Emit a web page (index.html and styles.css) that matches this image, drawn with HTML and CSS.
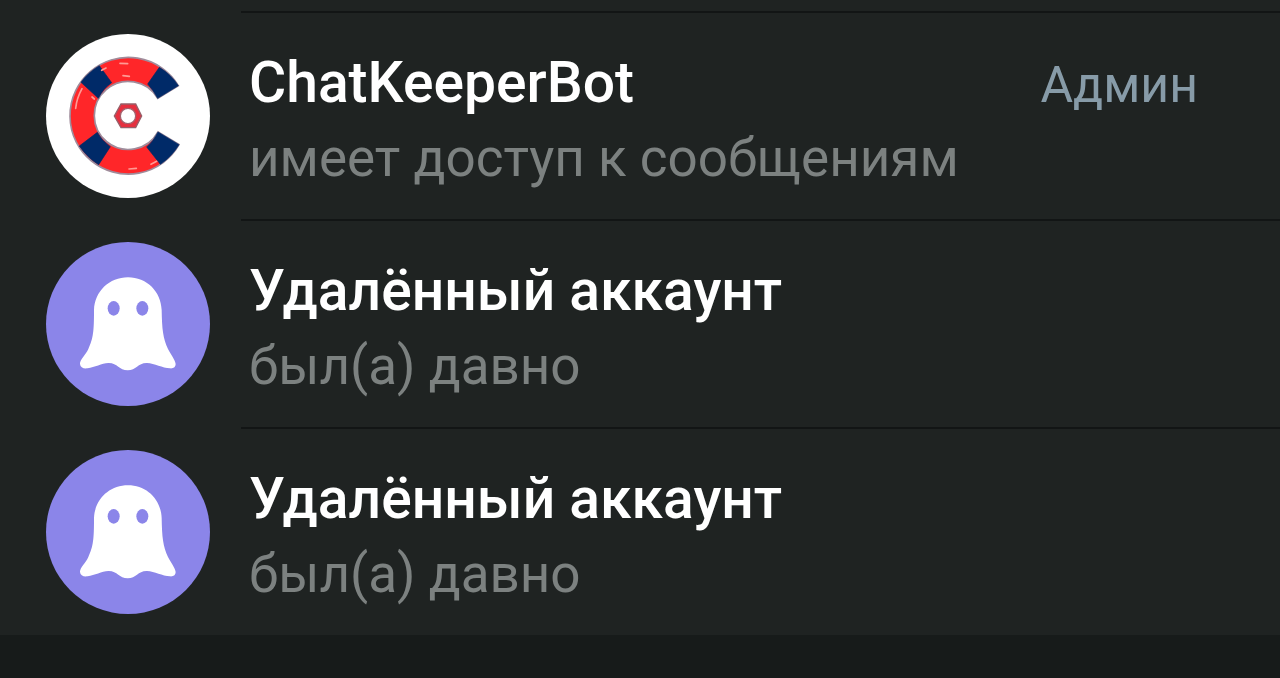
FILE: index.html
```html
<!DOCTYPE html>
<html lang="ru">
<head>
<meta charset="utf-8">
<meta name="viewport" content="width=device-width, initial-scale=1">
<title>Участники</title>
<link rel="stylesheet" href="styles.css">
</head>
<body>
<svg class="defs" aria-hidden="true">
  <symbol id="ghost" viewBox="18 18 492 492">
    <path fill="#fff" d="M264 124C208 124 164 166 162 222C162 285 160 307 145 339C137 357 119 372 120 384C121 394 130 399 143 397C164 394 185 382 205 381C232 380 237 403 263 403C289 403 294 380 321 381C344 382 367 396 390 397C401 398 407 393 407 384C406 372 392 355 384 339C369 307 366 279 365 222C363 166 320 124 264 124Z"/>
    <ellipse cx="221" cy="217" rx="18" ry="22" fill="#8b85e9"/>
    <ellipse cx="307" cy="217" rx="18" ry="22" fill="#8b85e9"/>
  </symbol>
</svg>
<ul class="members">
  <li class="member">
    <svg class="avatar avatar-bot" viewBox="18 18 492 492" role="img" aria-label="ChatKeeperBot">
      <path fill="#ff2629" stroke="#a08c9b" stroke-width="5" d="M415 173A175 175 0 1 0 417 350L354 312A102 102 0 1 1 353 211Z"/>
      <g fill="#002a68" stroke="#002a68" stroke-width="2">
        <path d="M358 118Q393 139 415 173L353 211Q341 188 323 168Z"/>
        <path d="M178 113L215 164Q190 181 175 211L123 163Q143 134 178 113Z"/>
        <path d="M118 354L172 313Q184 337 211 356L176 410Q143 390 118 354Z"/>
        <path d="M354 312L417 350Q394 387 361 409L320 357Q342 338 354 312Z"/>
      </g>
      <g fill="none" stroke="#ff9a94" stroke-width="5" stroke-linecap="round">
        <path d="M240 106L263 107M249 143L268 145M185 127L198 120M126 182Q110 211 107 241M156 207L163 213M267 423L289 421M333 409L350 400"/>
      </g>
      <path fill="#e5303f" stroke="#96606a" stroke-width="4" d="M243 228H287L305 264L287 299H243L223 264Z"/>
      <circle cx="264" cy="264" r="23" fill="#fff" stroke="#a5606c" stroke-width="4"/>
    </svg>
    <div class="details">
      <div class="text">
        <div class="name">ChatKeeperBot</div>
        <div class="status">имеет доступ к сообщениям</div>
      </div>
      <span class="role">Админ</span>
    </div>
  </li>
  <li class="member">
    <svg class="avatar avatar-deleted" role="img" aria-label="Удалённый аккаунт"><use href="#ghost"/></svg>
    <div class="details">
      <div class="text">
        <div class="name">Удалённый аккаунт</div>
        <div class="status">был(а) давно</div>
      </div>
    </div>
  </li>
  <li class="member">
    <svg class="avatar avatar-deleted" role="img" aria-label="Удалённый аккаунт"><use href="#ghost"/></svg>
    <div class="details">
      <div class="text">
        <div class="name">Удалённый аккаунт</div>
        <div class="status">был(а) давно</div>
      </div>
    </div>
  </li>
</ul>
</body>
</html>
```

FILE: styles.css
```css
* {
  box-sizing: border-box;
}

body {
  margin: 0;
  background: #171b1a;
  font-family: Roboto, "Noto Sans", sans-serif;
}

.defs {
  display: none;
}

.members {
  margin: 0;
  padding: 11px 0 0;
  list-style: none;
  background: #1f2322;
}

.member {
  display: flex;
  gap: 31px;
  padding-left: 46px;
}

.avatar {
  flex: none;
  width: 164px;
  height: 164px;
  margin: 23px 0 21px;
  border-radius: 50%;
}

.avatar-bot {
  background: #fff;
}

.avatar-deleted {
  background: #8b85e9;
}

.details {
  display: flex;
  flex: 1;
  justify-content: space-between;
  min-width: 0;
  padding: 34px 82px 0 8px;
  border-top: 2px solid #121515;
}

.text {
  display: grid;
  gap: 4px;
  align-content: start;
}

.name {
  color: #fff;
  font-size: 57px;
  font-weight: 500;
  line-height: 72px;
}

.status {
  color: #7c8180;
  font-size: 53px;
  line-height: 70px;
}

.role {
  color: #879ba8;
  font-size: 50px;
  line-height: 76px;
}
```
